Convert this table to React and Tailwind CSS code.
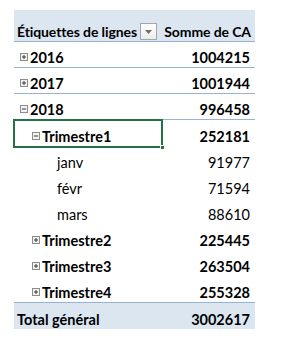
const ROWS = [
  { label: '2016', value: '1004215', level: 0, icon: 'plus', bold: true, line: true },
  { label: '2017', value: '1001944', level: 0, icon: 'plus', bold: true, line: true },
  { label: '2018', value: '996458', level: 0, icon: 'minus', bold: true, line: true },
  { label: 'Trimestre1', value: '252181', level: 1, icon: 'minus', bold: true, selected: true },
  { label: 'janv', value: '91977', level: 2 },
  { label: 'févr', value: '71594', level: 2 },
  { label: 'mars', value: '88610', level: 2 },
  { label: 'Trimestre2', value: '225445', level: 1, icon: 'plus', bold: true },
  { label: 'Trimestre3', value: '263504', level: 1, icon: 'plus', bold: true },
  { label: 'Trimestre4', value: '255328', level: 1, icon: 'plus', bold: true },
]

function ToggleBox({ type }) {
  return (
    <svg width="8" height="8" viewBox="0 0 8 8" className="mb-[6px] mr-[2px] shrink-0">
      <rect x="0.5" y="0.5" width="7" height="7" fill="#f2f2f2" stroke="#8c8c8c" />
      <line x1="2" y1="4" x2="6" y2="4" stroke="#3a3a3a" />
      {type === 'plus' && <line x1="4" y1="2" x2="4" y2="6" stroke="#3a3a3a" />}
    </svg>
  )
}

function Row({ row }) {
  const indent = row.level === 0 ? 'pl-[6px]' : row.level === 1 ? 'pl-[18px]' : 'pl-[43px]'
  return (
    <div className={`relative flex h-[26px] items-end ${row.line ? 'border-b border-[#95b3d7]' : ''}`}>
      <div className={`flex w-[149px] items-end ${indent} ${row.bold ? 'font-bold' : ''}`}>
        {row.icon && <ToggleBox type={row.icon} />}
        <span>{row.label}</span>
      </div>
      <div className={`flex-1 pr-[5px] text-right ${row.bold ? 'font-bold' : ''}`}>{row.value}</div>
      {row.selected && (
        <div className="absolute left-[-1px] top-[-1px] h-[29px] w-[150px] border-2 border-[#217346]">
          <div className="absolute bottom-[-4px] right-[-4px] h-[5px] w-[5px] border border-white bg-[#217346]" />
        </div>
      )}
    </div>
  )
}

export default function App() {
  return (
    <div className="h-[358px] w-[287px] bg-white pl-[14px] pt-[10px] text-[14.5px] leading-[18px] text-black" style={{ fontFamily: 'Lato, "Liberation Sans", sans-serif' }}>
      <div className="w-[241px]">
        {/* header */}
        <div className="flex h-[32px] items-end whitespace-nowrap border-b border-[#95b3d7] bg-[#dce6f1] text-[14px] tracking-[-0.1px]">
          <span className="pl-[3px] font-bold">Étiquettes de lignes</span>
          <div className="mb-[1px] ml-[3px] flex h-[17px] w-[17px] shrink-0 items-center justify-center border border-[#a6a6a6] bg-gradient-to-b from-white to-[#ececec]">
            <svg width="7" height="4" viewBox="0 0 7 4"><path d="M0 0h7L3.5 4z" fill="#6d6d6d" /></svg>
          </div>
          <span className="flex-1 pr-[4px] text-right font-bold">Somme de CA</span>
        </div>

        {ROWS.map(row => <Row key={row.label} row={row} />)}

        {/* total */}
        <div className="flex h-[27px] items-end border-t border-[#95b3d7] bg-[#dce6f1] font-bold">
          <span className="pl-[3px]">Total général</span>
          <span className="flex-1 pr-[5px] text-right">3002617</span>
        </div>
      </div>
    </div>
  )
}
